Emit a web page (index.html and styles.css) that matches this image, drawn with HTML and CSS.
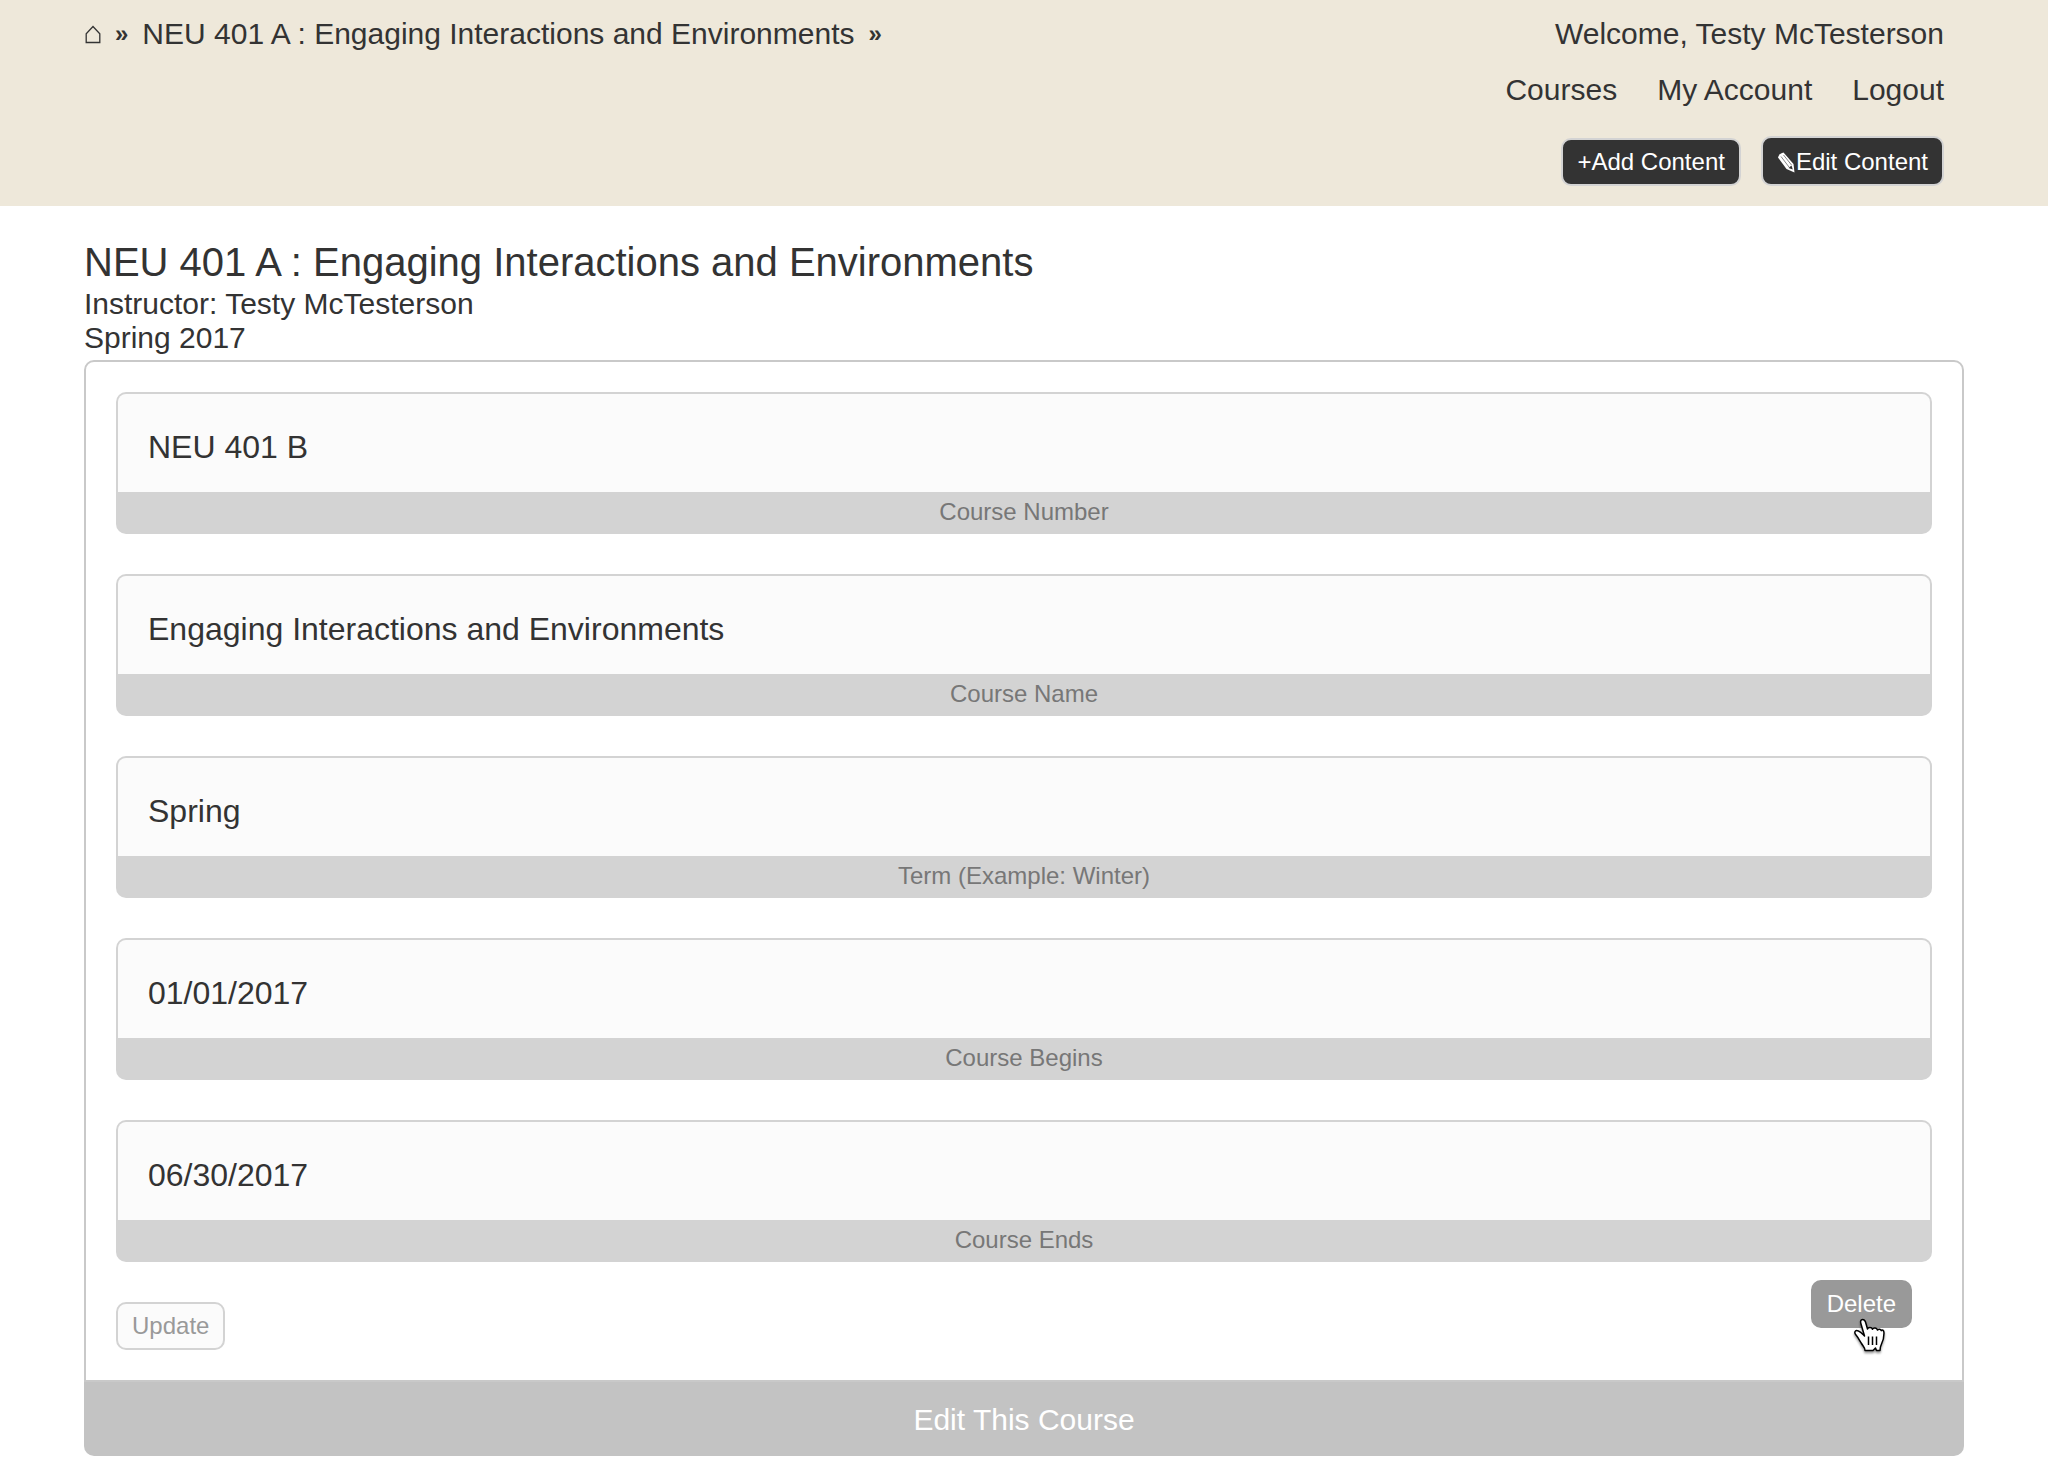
FILE: index.html
```html
<!DOCTYPE html>
<html lang="en">
<head>
<meta charset="utf-8">
<meta name="viewport" content="width=device-width, initial-scale=1">
<title>NEU 401 A : Engaging Interactions and Environments</title>
<link rel="stylesheet" href="styles.css">
</head>
<body>
<header class="site-header">
  <nav class="breadcrumb" aria-label="Breadcrumb">
    <a class="home" href="#" aria-label="Home"><svg width="16" height="19" viewBox="0 0 16 19" fill="none" stroke="currentColor" stroke-width="1.3"><path d="M1.200 17.500V8.800L8 1.500l6.800 7.300v8.700z"/></svg></a>
    <span class="separator">»</span>
    <a href="#">NEU 401 A : Engaging Interactions and Environments</a>
    <span class="separator">»</span>
  </nav>
  <div class="account">
    <p class="welcome">Welcome, Testy McTesterson</p>
    <nav class="menu" aria-label="Account">
      <a href="#">Courses</a>
      <a href="#">My Account</a>
      <a href="#">Logout</a>
    </nav>
    <div class="tools">
      <button type="button" class="tool">+Add Content</button>
      <button type="button" class="tool tool-edit"><svg width="19" height="21" viewBox="0 0 19 21"><path d="M1 5.500Q2 1.500 6.500 .5L16.500 12 17.500 20.500 9.500 17z" fill="#fff"/><path d="M4 4.500l8 10.500M6.500 3l8 10" fill="none" stroke="#888" stroke-width="1"/><path d="M11.500 16l3-2.500 1.300 4z" fill="#333"/></svg>Edit Content</button>
    </div>
  </div>
</header>
<main class="page">
  <h1>NEU 401 A : Engaging Interactions and Environments</h1>
  <p class="detail">Instructor: Testy McTesterson</p>
  <p class="detail">Spring 2017</p>
  <form class="panel">
    <div class="panel-body">
      <div class="field"><input id="number" type="text" value="NEU 401 B"><label for="number">Course Number</label></div>
      <div class="field"><input id="name" type="text" value="Engaging Interactions and Environments"><label for="name">Course Name</label></div>
      <div class="field"><input id="term" type="text" value="Spring"><label for="term">Term (Example: Winter)</label></div>
      <div class="field"><input id="begins" type="text" value="01/01/2017"><label for="begins">Course Begins</label></div>
      <div class="field"><input id="ends" type="text" value="06/30/2017"><label for="ends">Course Ends</label></div>
      <div class="actions">
        <button type="submit" class="action update">Update</button>
        <div class="delete-wrap">
          <button type="button" class="action delete">Delete</button>
          <svg class="pointer" width="34" height="38" viewBox="0 0 34 38" aria-hidden="true"><path d="M11.500 19 8 7C7 4 8 2.500 9.500 2.500c1.500 0 2.500 1 3 2.500l2 7c.5-2 4.300-2.300 5 .2.800-1.800 4.500-1.700 5 .8 1.200-1.200 3-.8 3.800.6C29 12.500 31 13 31 16c0 5-1 8-2.500 11-1 2-1.500 3.500-1.500 6.500h-3.500L22.500 31 20 33.500h-8c0-3-2-4.500-3.500-7C6.500 23.500 5.500 21 3 18 .5 15 2.500 12.500 5.500 14c2.500 1 4 3 6 5z" fill="#fff" stroke="#000" stroke-width="1.500" stroke-linejoin="round"/><path d="M15.500 19.500V28M19.500 19.500V28M23.500 19.500V28" stroke="#000" stroke-width="1.500"/></svg>
        </div>
      </div>
    </div>
    <h2 class="panel-title">Edit This Course</h2>
  </form>
</main>
</body>
</html>
```
FILE: styles.css
```css
* {
  box-sizing: border-box;
}

body {
  margin: 0;
  background: #fff;
  color: #333;
  font: 30px/34px "Liberation Sans", Arial, sans-serif;
}

a {
  color: inherit;
  text-decoration: none;
}

p, h1, h2 {
  margin: 0;
  font-weight: 400;
}

.site-header {
  display: flex;
  justify-content: space-between;
  padding: 17px 104px 20px 84px;
  background: #eee8da;
}

.breadcrumb {
  display: flex;
  gap: 14px;
}

.separator {
  font-size: 24px;
  font-weight: 700;
}

.home {
  display: flex;
  align-items: center;
  height: 34px;
  padding-left: 1px;
}

.account {
  display: flex;
  flex-direction: column;
  align-items: flex-end;
}

.menu {
  display: flex;
  gap: 40px;
  margin-top: 22px;
}

.tools {
  display: flex;
  align-items: flex-end;
  gap: 20px;
  margin-top: 29px;
}

button {
  font: 24px/28px "Liberation Sans", Arial, sans-serif;
  border: 2px solid #d3d3d3;
  border-radius: 10px;
  cursor: pointer;
}

.tool {
  height: 48px;
  padding: 8px 14px;
  background: #333;
  color: #fff;
}

.tool-edit {
  display: flex;
  align-items: center;
  height: 50px;
  padding-top: 10px;
}

.page {
  padding: 32px 84px 15px;
}

h1 {
  margin-bottom: 1px;
  font-size: 40px;
  line-height: 48px;
}

.detail {
  line-height: 34px;
}

.panel {
  margin-top: 5px;
}

.panel-body {
  padding: 30px;
  border: 2px solid #c9c9c9;
  border-radius: 10px 10px 0 0;
}

.field {
  margin-bottom: 40px;
}

.field input {
  display: block;
  width: 100%;
  height: 100px;
  padding: 8px 30px 0;
  border: 2px solid #d3d3d3;
  border-bottom: 0;
  border-radius: 10px 10px 0 0;
  outline: 0;
  background: #fbfbfb;
  color: inherit;
  font: 32px/36px "Liberation Sans", Arial, sans-serif;
}

.field label {
  display: block;
  height: 42px;
  padding-top: 6px;
  border-radius: 0 0 10px 10px;
  background: #d3d3d3;
  color: #777;
  font-size: 24px;
  line-height: 28px;
  text-align: center;
}

.actions {
  display: flex;
  justify-content: space-between;
  align-items: flex-end;
}

.action {
  height: 48px;
  padding: 8px 14px;
}

.update {
  background: #fbfbfb;
  color: #999;
}

.delete-wrap {
  position: relative;
  margin: -22px 20px 22px 0;
  line-height: 0;
}

.delete {
  border-color: #999;
  background: #999;
  color: #fff;
}

.pointer {
  position: absolute;
  left: 42px;
  top: 37px;
  filter: drop-shadow(0 2px 1px rgba(0, 0, 0, .4));
}

.panel-title {
  padding: 21px 0 19px;
  border-radius: 0 0 10px 10px;
  background: #c3c3c3;
  color: #fff;
  font-size: 30px;
  text-align: center;
}
```
